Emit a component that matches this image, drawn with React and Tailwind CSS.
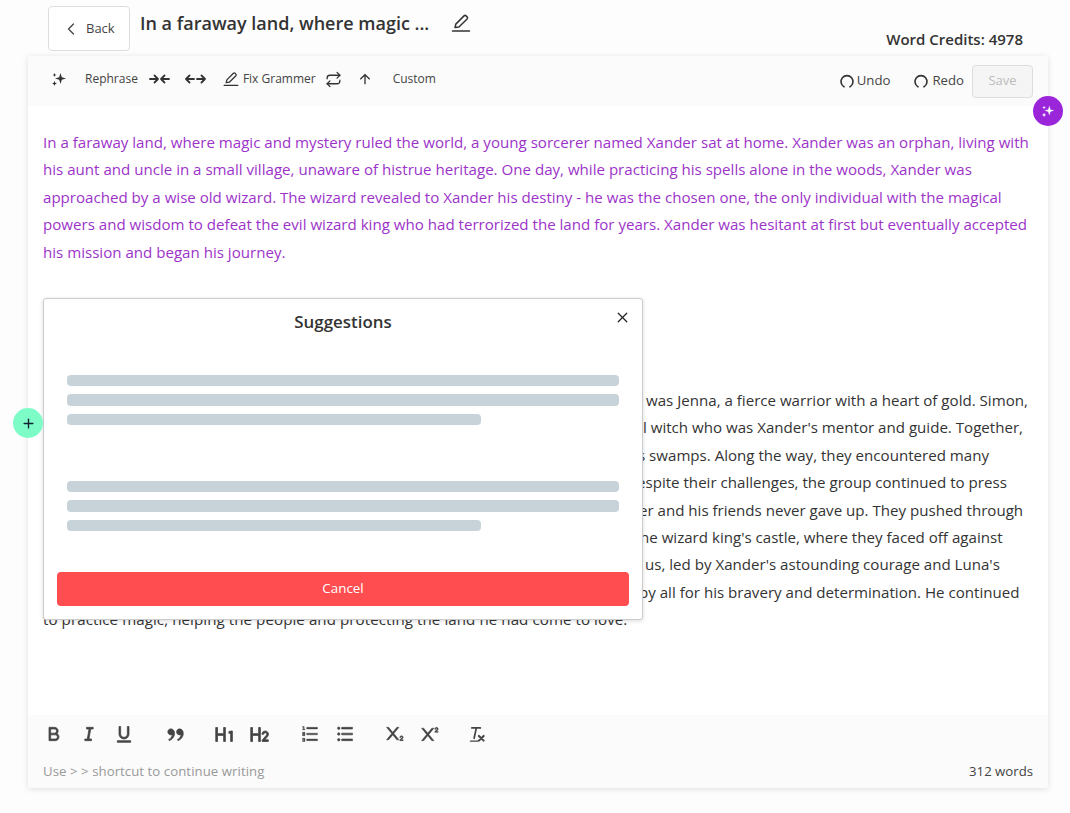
import { ChevronLeft, Plus, Repeat, X } from "lucide-react";
import {
  RiArrowUpLine,
  RiBold,
  RiDoubleQuotesR,
  RiH1,
  RiH2,
  RiItalic,
  RiListOrdered,
  RiListUnordered,
  RiSubscript,
  RiSuperscript,
  RiUnderline,
} from "react-icons/ri";

const SparkIcon = ({ className }) => (
  <svg viewBox="0 0 16 16" fill="currentColor" className={className}>
    <path d="M9.5 2l1.3 4.2L15 7.5l-4.2 1.3L9.5 13 8.2 8.8 4 7.5l4.2-1.3z" />
    <path d="M3.5 2l.6 1.4 1.4.6-1.4.6-.6 1.4-.6-1.4L1.5 4l1.4-.6z" />
    <path d="M3.5 10l.7 1.8 1.8.7-1.8.7-.7 1.8-.7-1.8-1.8-.7 1.8-.7z" />
  </svg>
);

const ArcIcon = ({ className }) => (
  <svg viewBox="0 0 16 16" fill="none" stroke="currentColor" strokeWidth="1.6" strokeLinecap="round" className={className}>
    <path d="M5 13.8A6 6 0 1 1 11 13.8" />
  </svg>
);

const PenIcon = ({ className, strokeWidth = 1.5 }) => (
  <svg viewBox="0 0 20 20" fill="none" stroke="currentColor" strokeWidth={strokeWidth} strokeLinecap="round" strokeLinejoin="round" className={className}>
    <path d="M4 14.5l.8-3.4L13 2.9a1.5 1.5 0 0 1 2.1 0l1 1a1.5 1.5 0 0 1 0 2.1L7.9 14z" />
    <path d="M1.5 18h17" />
  </svg>
);

const ShrinkIcon = ({ className }) => (
  <svg viewBox="0 0 21 12" fill="none" stroke="currentColor" strokeWidth="1.8" strokeLinecap="round" strokeLinejoin="round" className={className}>
    <path d="M1 6h8M5.5 2.5L9 6l-3.5 3.5" />
    <path d="M20 6h-8M15.5 2.5L12 6l3.5 3.5" />
  </svg>
);

const ExpandIcon = ({ className }) => (
  <svg viewBox="0 0 21 12" fill="none" stroke="currentColor" strokeWidth="1.8" strokeLinecap="round" strokeLinejoin="round" className={className}>
    <path d="M9 6H1M4.5 2.5L1 6l3.5 3.5" />
    <path d="M12 6h8M16.5 2.5L20 6l-3.5 3.5" />
  </svg>
);

const ClearIcon = ({ className }) => (
  <svg viewBox="0 0 18 18" fill="none" stroke="currentColor" strokeLinecap="round" className={className}>
    <path d="M3 2h9M7.8 2L5.4 13" strokeWidth="1.8" />
    <path d="M1.5 16h8" strokeWidth="1.4" />
    <path d="M10.5 10.5l5 5M15.5 10.5l-5 5" strokeWidth="2.2" />
  </svg>
);

const purpleLines = [
  "In a faraway land, where magic and mystery ruled the world, a young sorcerer named Xander sat at home. Xander was an orphan, living with",
  "his aunt and uncle in a small village, unaware of histrue heritage. One day, while practicing his spells alone in the woods, Xander was",
  "approached by a wise old wizard. The wizard revealed to Xander his destiny - he was the chosen one, the only individual with the magical",
  "powers and wisdom to defeat the evil wizard king who had terrorized the land for years. Xander was hesitant at first but eventually accepted",
  "his mission and began his journey.",
];

// only the part that shows beside the modal
const storyLines = [
  { text: "was Jenna, a fierce warrior with a heart of gold. Simon,", cls: "pl-[603px]" },
  { text: "l witch who was Xander's mentor and guide. Together,", cls: "pl-[600px]" },
  { text: "s swamps. Along the way, they encountered many", cls: "pl-[595px]" },
  { text: "espite their challenges, the group continued to press", cls: "pl-[594px]" },
  { text: "er and his friends never gave up. They pushed through", cls: "pl-[596px]" },
  { text: "he wizard king's castle, where they faced off against", cls: "pl-[597px]" },
  { text: "us, led by Xander's astounding courage and Luna's", cls: "pl-[602px]" },
  { text: "by all for his bravery and determination. He continued", cls: "pl-[596px]" },
  { text: "to practice magic, helping the people and protecting the land he had come to love.", cls: "tracking-[0.08px]" },
];

const Skeleton = ({ className }) => (
  <div className={className}>
    <div className="h-[11px] rounded bg-[#c7d3d9]" />
    <div className="h-3 mt-2 rounded bg-[#c7d3d9]" />
    <div className="h-[11px] mt-2 w-[414px] rounded bg-[#c7d3d9]" />
  </div>
);

export default function App() {
  return (
    <div className="relative w-[1070px] h-[813px] overflow-hidden bg-[#fdfdfd] text-[#333] font-['Open_Sans',sans-serif]">
      {/* Header */}
      <div className="flex items-start h-[56px] pt-[6px] pl-[48px] pr-[47px]">
        <button className="flex items-center w-[82px] h-[45px] pl-[12px] bg-white border border-[#ddd] rounded-sm text-[13px] text-[#444]">
          <ChevronLeft className="w-5 h-5 mr-[5px]" strokeWidth={1.5} />
          Back
        </button>
        <h1 className="ml-[10px] mt-[5px] text-[18px] leading-6 font-semibold text-[#333]">In a faraway land, where magic ...</h1>
        <PenIcon className="ml-[22px] mt-[7px] w-5 h-5 text-[#333]" strokeWidth={1.5} />
        <div className="ml-auto mt-[23px] text-[15px] leading-5 font-semibold text-[#333]">Word Credits: 4978</div>
      </div>

      {/* Editor card */}
      <div className="relative ml-[28px] w-[1020px] h-[732px] flex flex-col bg-white shadow-[0_1px_6px_rgba(0,0,0,0.12)]">
        <div className="flex items-center h-[50px] bg-[#fbfbfb] text-[12px] text-[#444]">
          <div className="flex items-center pb-[4px]">
            <SparkIcon className="ml-[23px] w-4 h-4 text-[#333]" />
            <span className="ml-[18px]">Rephrase</span>
            <ShrinkIcon className="ml-[11px] w-[21px] h-3 text-[#333]" />
            <ExpandIcon className="ml-[15px] w-[21px] h-3 text-[#333]" />
            <PenIcon className="ml-[17px] w-4 h-4 text-[#333]" strokeWidth={1.6} />
            <span className="ml-[4px]">Fix Grammer</span>
            <Repeat className="ml-[9px] w-[17px] h-[17px] text-[#333]" strokeWidth={1.8} />
            <RiArrowUpLine className="ml-[15px] w-4 h-4 text-[#333]" />
            <span className="ml-[20px]">Custom</span>
          </div>
          <div className="ml-auto flex items-center text-[13.2px]">
            <ArcIcon className="w-4 h-4 text-[#333]" />
            <span className="ml-[2px]">Undo</span>
            <ArcIcon className="ml-[23px] w-4 h-4 text-[#333]" />
            <span className="ml-[3px]">Redo</span>
            <button className="ml-2 mr-[15px] w-[61px] h-[33px] border border-[#ddd] rounded-sm bg-[#f5f5f5] text-[13px] text-[#bbb]">Save</button>
          </div>
        </div>

        <div className="relative flex-1 pt-[23px] pl-[15px] text-[15.1px] leading-[27.4px]">
          <div className="text-[#9c33c9]">
            {purpleLines.map((line) => (
              <div key={line} className="whitespace-nowrap">{line}</div>
            ))}
          </div>
          <div className="mt-[121px]">
            {storyLines.map((line) => (
              <div key={line.text} className={`whitespace-nowrap ${line.cls}`}>{line.text}</div>
            ))}
          </div>

          {/* Suggestions modal */}
          <div className="absolute left-[15px] top-[192px] w-[600px] h-[322px] flex flex-col bg-white border border-[#ccc] rounded-[3px] shadow-[0_1px_4px_rgba(0,0,0,0.15)]">
            <div className="relative pt-[10px] text-center text-[16.9px] leading-[26px] font-semibold text-[#333]">
              Suggestions
              <X className="absolute right-[11px] top-[10px] w-[17px] h-[17px] text-[#222]" strokeWidth={1.8} />
            </div>
            <Skeleton className="mt-[40px] mx-[23px]" />
            <Skeleton className="mt-[56px] mx-[23px]" />
            <button className="mt-[41px] mx-[13px] h-[34px] bg-[#ff4d50] rounded-sm text-[13.4px] text-white">Cancel</button>
          </div>
        </div>

        <div className="h-[73px] bg-[#fbfbfb] text-[#444]">
          <div className="flex items-center h-[38px]">
            <RiBold className="ml-[16px] w-5 h-5" strokeWidth={0.9} />
            <RiItalic className="ml-[15px] w-5 h-5" strokeWidth={0.9} />
            <RiUnderline className="ml-[15px] w-5 h-5" strokeWidth={0.9} />
            <RiDoubleQuotesR className="ml-[31px] w-[21px] h-[21px]" strokeWidth={0.6} />
            <RiH1 className="ml-[28px] w-[21px] h-[21px]" strokeWidth={0.9} />
            <RiH2 className="ml-[14px] w-[21px] h-[21px]" strokeWidth={0.9} />
            <RiListOrdered className="ml-[30px] w-5 h-5" strokeWidth={0.4} />
            <RiListUnordered className="ml-[15px] w-5 h-5" strokeWidth={0.7} />
            <RiSubscript className="ml-[29px] w-5 h-5" strokeWidth={0.6} />
            <RiSuperscript className="ml-[15px] w-5 h-5" strokeWidth={0.6} />
            <ClearIcon className="ml-[30px] w-[17px] h-[17px]" />
          </div>
          <div className="flex justify-between items-center h-[35px] pl-[15px] pr-[15px] text-[13.2px] pt-[2px]">
            <span className="text-[#999] tracking-[0.06px]">Use &gt; &gt; shortcut to continue writing</span>
            <span>312 words</span>
          </div>
        </div>

        {/* Floating buttons on the card edges */}
        <div className="absolute right-[-15px] top-[40px] w-[30px] h-[30px] rounded-full bg-[#9b26d9] flex items-center justify-center">
          <SparkIcon className="w-[14px] h-[14px] text-white" />
        </div>
      </div>

      <div className="absolute left-[13px] top-[408px] w-[30px] h-[30px] rounded-full bg-[#7dfcc8] flex items-center justify-center">
        <Plus className="w-[15px] h-[15px] text-[#123]" strokeWidth={2.2} />
      </div>
    </div>
  );
}
